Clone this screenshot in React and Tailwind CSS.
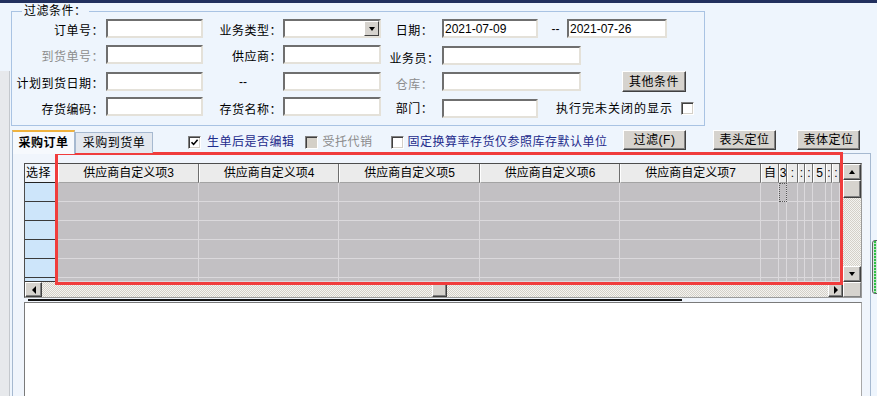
import React from 'react';

const cols = [
  { w: 'w-[141px]', t: '供应商自定义项3' },
  { w: 'w-[140px]', t: '供应商自定义项4' },
  { w: 'w-[141px]', t: '供应商自定义项5' },
  { w: 'w-[140px]', t: '供应商自定义项6' },
  { w: 'w-[141px]', t: '供应商自定义项7' },
  { w: 'w-[18px]', t: '自' },
  { w: 'w-[8px]', t: '3' },
  { w: 'w-[11px]', t: ':' },
  { w: 'w-[7px]', t: ':' },
  { w: 'w-[8px]', t: ':' },
  { w: 'w-[13px]', t: '5' },
  { w: 'w-[6px]', t: ':' },
  { w: 'w-[8px]', t: ':' },
  { w: 'w-[3px]', t: '' },
];

const inputCls =
  'h-[19px] bg-white border-2 border-t-[#6f6f6f] border-l-[#6f6f6f] border-r-[#e4e1d9] border-b-[#e4e1d9] flex items-center pl-[1px] tracking-normal text-black';

function Input({ w, value, className = '' }) {
  return <div className={`${inputCls} ${w} ${className}`}>{value}</div>;
}

function Label({ w, children, grey, center, className = 'pt-[4px]' }) {
  return (
    <div
      className={`${w} h-[19px] flex items-center whitespace-nowrap ${center ? 'justify-center pl-[6px]' : 'justify-end pr-[1px]'} ${grey ? 'text-[#8d8d8d]' : 'text-black'} ${className}`}
    >
      {children}
    </div>
  );
}

function Btn({ children, className = '' }) {
  return (
    <div
      className={`flex items-center justify-center bg-[#d6d3ce] border border-t-white border-l-white border-r-[#404040] border-b-[#404040] shadow-[inset_-1px_-1px_0_#808080] text-black whitespace-nowrap ${className}`}
    >
      {children}
    </div>
  );
}

function Box({ checked, disabled, className = '' }) {
  return (
    <div
      className={`w-[13px] h-[13px] border border-t-[#808080] border-l-[#808080] border-r-white border-b-white shadow-[inset_1px_1px_0_#404040,inset_-1px_-1px_0_#d4d0c8] flex items-center justify-center ${disabled ? 'bg-[#d4d0c8]' : 'bg-white'} ${className}`}
    >
      {checked && (
        <svg width="9" height="9" viewBox="0 0 9 9">
          <path d="M1.5 4.2 L3.6 6.4 L7.6 1.8" fill="none" stroke="#000" strokeWidth="1.6" />
        </svg>
      )}
    </div>
  );
}

function Arrow({ dir }) {
  const pts = {
    up: '1,5 4,1 7,5',
    down: '1,1 4,5 7,1',
    left: '5,0 1,4 5,8',
    right: '1,0 5,4 1,8',
  }[dir];
  const size = dir === 'up' || dir === 'down' ? [8, 6] : [6, 8];
  return (
    <svg width={size[0]} height={size[1]} viewBox={`0 0 ${size[0]} ${size[1]}`}>
      <polygon points={pts} fill="#000" />
    </svg>
  );
}

const track =
  'bg-[#e4e2dc] bg-[repeating-conic-gradient(#d4d0c8_0_25%,#f4f3f0_0_50%)] bg-[length:2px_2px]';

export default function App() {
  return (
    <div className="w-[877px] h-[396px] overflow-hidden relative bg-[#eef5fd] font-['Liberation_Sans','Noto_Sans_CJK_SC',sans-serif] text-[12px] leading-[14px] tracking-[0.5px]">
      <div className="h-[3px] bg-[#22305e]" />
      <div className="flex">
        <div className="w-[10px] flex flex-col">
          <div className="h-[68px]" />
          <div className="h-[330px] bg-[#e7e9ec] border-r border-[#c4c8cd]" />
        </div>

        <div className="w-[867px]">
          <fieldset className="ml-[1px] w-[694px] h-[123px] border border-[#a9c3e3]">
            <legend className="ml-[10px] px-[2px] leading-[16px] text-black">过滤条件：</legend>

            <div className="flex items-start h-[19px]">
              <Label w="w-[93px]">订单号：</Label>
              <Input w="w-[97px] ml-[1px]" />
              <Label w="w-[80px]">业务类型：</Label>
              <div className={`${inputCls} w-[98px] justify-end pr-0`}>
                <div className="w-[15px] h-[15px] bg-[#d6d3ce] border border-t-white border-l-white border-r-[#404040] border-b-[#404040] flex items-center justify-center">
                  <Arrow dir="down" />
                </div>
              </div>
              <Label w="w-[61px]" center>日期：</Label>
              <Input w="w-[96px]" value="2021-07-09" />
              <div className="w-[29px] h-[19px] flex items-center justify-center pl-[6px] tracking-normal">--</div>
              <Input w="w-[100px]" value="2021-07-26" />
            </div>

            <div className="flex items-start h-[19px] mt-[7px]">
              <Label w="w-[93px]" grey>到货单号：</Label>
              <Input w="w-[97px] ml-[1px]" />
              <Label w="w-[80px]">供应商：</Label>
              <Input w="w-[98px]" />
              <Label w="w-[61px]" center className="pt-[8px]">业务员：</Label>
              <Input w="w-[139px]" className="mt-[1px]" />
            </div>

            <div className="flex items-start h-[19px] mt-[8px]">
              <Label w="w-[93px]">计划到货日期：</Label>
              <Input w="w-[97px] ml-[1px]" />
              <div className="w-[80px] h-[19px] flex items-center justify-center tracking-normal">--</div>
              <Input w="w-[98px]" />
              <Label w="w-[61px]" grey center className="pt-[7px]">仓库：</Label>
              <Input w="w-[139px]" />
              <Btn className="ml-[41px] w-[64px] h-[21px] -mt-[1px]">其他条件</Btn>
            </div>

            <div className="flex items-start h-[19px] mt-[6px]">
              <Label w="w-[93px]" className="pt-[6px]">存货编码：</Label>
              <Input w="w-[97px] ml-[1px]" />
              <Label w="w-[80px]" className="pt-[6px]">存货名称：</Label>
              <Input w="w-[98px]" />
              <Label w="w-[61px]" center className="pt-[5px]">部门：</Label>
              <Input w="w-[96px]" className="mt-[2px]" />
              <div className="ml-[18px] mt-[5px] whitespace-nowrap tracking-[1px]">执行完未关闭的显示</div>
              <Box className="ml-[8px] mt-[5px]" />
            </div>
          </fieldset>

          <div className="flex items-start h-[23px] mt-[4px] relative z-10">
            <div className="ml-[2px] w-[63px] h-[24px] bg-[#f6f9fd] border-t-2 border-t-[#efb23e] border-x border-x-[#a6b9d0] flex items-center justify-center font-bold text-black tracking-[0.5px]">
              采购订单
            </div>
            <div className="w-[78px] h-[21px] mt-[2px] bg-[#e3e8ef] border border-[#a6b9d0] border-b-0 flex items-center justify-center text-black">
              采购到货单
            </div>
            <div className="w-[470px] flex items-center pl-[35px] mt-[5px] whitespace-nowrap">
              <Box checked />
              <span className="ml-[6px] text-[#1e2c8c]">生单后是否编辑</span>
              <Box disabled className="ml-[10px]" />
              <span className="ml-[5px] text-[#8b8b8b]">受托代销</span>
              <Box className="ml-[18px]" />
              <span className="ml-[4px] text-[#1e2c8c]">固定换算率存货仅参照库存默认单位</span>
            </div>
            <Btn className="w-[63px] h-[20px]">过滤(F)</Btn>
            <Btn className="ml-[27px] w-[63px] h-[20px]">表头定位</Btn>
            <Btn className="ml-[21px] w-[63px] h-[20px]">表体定位</Btn>
          </div>

          <div className="ml-[2px] w-[859px] h-[260px] border border-[#a6b9d0] bg-[#f0f5fc] pl-[11px] pt-[9px]">
            <div className="w-[838px] border border-t-[#4d4d4d] border-l-[#4d4d4d] border-r-[#9a9a9a] border-b-[#9a9a9a]">
              <div className="flex">
                <div className="w-[818px] h-[118px] overflow-hidden bg-[#c2c0c3]">
                  <div className="flex h-[19px]">
                    <div className="w-[33px] h-[19px] bg-[#eef4fb] border-r border-r-[#333] border-b border-b-[#222] flex items-center pl-[1px] text-black">
                      选择
                    </div>
                    {cols.map((c, i) => (
                      <div
                        key={i}
                        className={`${c.w} h-[19px] shrink-0 overflow-hidden bg-[#ebebeb] border-r border-r-[#6e6e6e] border-l border-l-white border-b border-b-[#a3a3a3] flex items-center justify-center whitespace-nowrap tracking-normal text-black`}
                      >
                        {c.t}
                      </div>
                    ))}
                  </div>
                  {[0, 1, 2, 3, 4, 5].map((r) => (
                    <div key={r} className={`flex ${r === 5 ? 'h-[4px]' : 'h-[19px]'}`}>
                      <div className="w-[33px] h-full shrink-0 bg-[#cde5fa] border-r border-r-[#2a2a2a] border-b border-b-[#3a3a3a]" />
                      {cols.map((c, i) => (
                        <div
                          key={i}
                          className={`${c.w} h-full shrink-0 border-r border-b border-[#dbd9dc] ${r === 0 && i === 6 ? 'outline-1 outline-dotted outline-[#555] -outline-offset-1' : ''}`}
                        />
                      ))}
                    </div>
                  ))}
                </div>
                <div className="w-[18px] h-[118px] flex flex-col">
                  <Btn className="h-[16px]">
                    <Arrow dir="up" />
                  </Btn>
                  <Btn className="h-[18px]" />
                  <div className={`flex-1 ${track}`} />
                  <Btn className="h-[16px]">
                    <Arrow dir="down" />
                  </Btn>
                </div>
              </div>
              <div className="flex h-[15px]">
                <Btn className="w-[17px] h-[15px]">
                  <Arrow dir="left" />
                </Btn>
                <div className={`w-[390px] ${track}`} />
                <Btn className="w-[15px] h-[15px]" />
                <div className={`w-[381px] ${track}`} />
                <Btn className="w-[15px] h-[15px]">
                  <Arrow dir="right" />
                </Btn>
                <div className="w-[18px] bg-[#d6d3ce] border border-t-white border-l-white border-r-[#808080] border-b-[#808080]" />
              </div>
            </div>
            <div className="ml-[4px] mt-[1px] w-[654px] h-[2px] bg-[#111]" />
            <div className="mt-[1px] w-[838px] h-[100px] bg-white border border-t-[#7a7a7a] border-l-[#7a7a7a] border-r-[#a8a8a8]" />
          </div>
        </div>
      </div>

      <div className="absolute left-[55px] top-[152px] w-[788px] h-[133px] border-[3px] border-[#f03c3c] pointer-events-none" />

      <div className="absolute left-[872px] top-[240px] w-[6px] h-[54px] rounded-l-[3px] border border-[#5f6366] bg-[#dfe3e6] flex justify-center">
        <div className="w-[2px] h-full bg-[repeating-linear-gradient(to_bottom,#2fbf45_0_2px,#b8e6bf_2px_3px)]" />
      </div>
    </div>
  );
}
